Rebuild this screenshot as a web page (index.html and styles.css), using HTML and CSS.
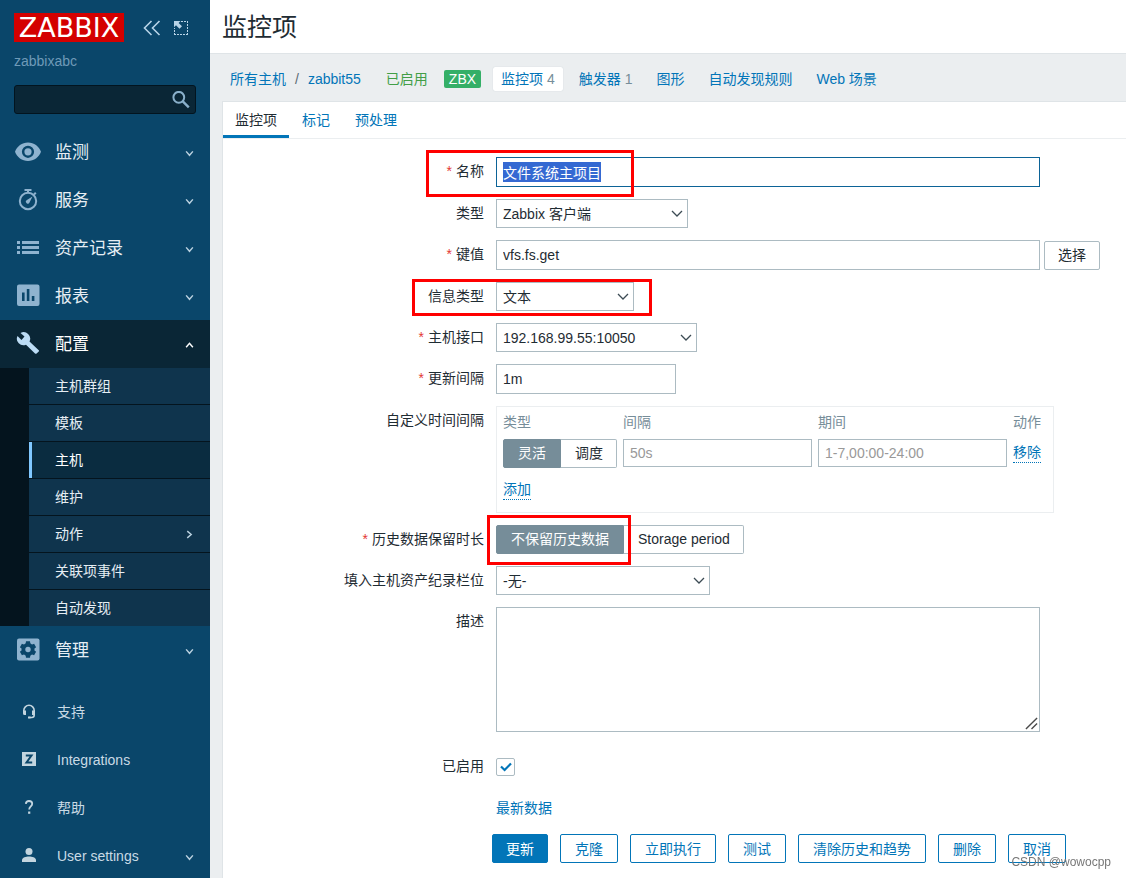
FILE: index.html
```html
<!DOCTYPE html>
<html lang="zh-CN">
<head>
<meta charset="utf-8">
<meta name="viewport" content="width=device-width, initial-scale=1">
<title>监控项</title>
<link rel="stylesheet" href="styles.css">
<script src="script.js" defer></script>
</head>
<body>
<div class="layout">
  <aside class="sidebar">
    <div class="sidebar-header">
      <a class="logo" href="#">ZABBIX</a>
      <button class="icon-button" type="button" aria-label="收起侧栏">
        <svg width="18" height="16" viewBox="0 0 18 16" fill="none" stroke="currentColor" stroke-width="1.6"><path d="M8.500 1 1.500 8l7 7M16.500 1l-7 7 7 7"/></svg>
      </button>
      <button class="icon-button" type="button" aria-label="隐藏侧栏">
        <svg width="16" height="16" viewBox="0 0 16 16" fill="none" stroke="currentColor"><path d="M8 1.500h7M14.500 1v14M15 14.500H1M1.500 15V8" stroke-dasharray="2 1"/><path d="M1 1h6.500L5.600 2.900 9 6.300 6.500 8.800 3 5.300 1 7.300z" fill="currentColor" stroke="none"/></svg>
      </button>
    </div>
    <div class="server-name">zabbixabc</div>
    <form class="search">
      <input class="search-input" type="text" aria-label="搜索">
      <button class="search-button" type="button" aria-label="搜索">
        <svg width="18" height="18" viewBox="0 0 18 18" fill="none" stroke="currentColor"><circle cx="6.800" cy="6.300" r="5.400" stroke-width="2"/><path d="m10.800 10.300 6 6" stroke-width="2.400"/></svg>
      </button>
    </form>
    <nav class="menu">
      <a class="menu-item" href="#">
        <svg class="menu-icon" viewBox="0 0 28 24"><path fill="currentColor" fill-rule="evenodd" d="M14 2.500C8 2.500 3 6.300 1 11.800 3 17.300 8 21 14 21s11-3.700 13-9.200C25 6.300 20 2.500 14 2.500zm0 15.400a6.100 6.100 0 1 1 0-12.200 6.100 6.100 0 0 1 0 12.200zm0-2.500a3.600 3.600 0 1 0 0-7.200 3.600 3.600 0 0 0 0 7.200z"/></svg>
        <span>监测</span><svg class="chevron" viewBox="0 0 8 8"><path d="m1 3 3 3.500L7 3"/></svg>
      </a>
      <a class="menu-item" href="#">
        <svg class="menu-icon" viewBox="0 0 28 24" fill="none" stroke="currentColor"><circle cx="14" cy="13" r="8.200" stroke-width="2"/><path d="M10.500 2h7" stroke-width="2"/><path d="M14 2v3m6 1.500 1.800-1.800" stroke-width="2"/><path d="m18.500 8.500-3 6a1.900 1.900 0 1 1-3-2.200z" fill="currentColor" stroke="none"/></svg>
        <span>服务</span><svg class="chevron" viewBox="0 0 8 8"><path d="m1 3 3 3.500L7 3"/></svg>
      </a>
      <a class="menu-item" href="#">
        <svg class="menu-icon" viewBox="0 0 28 24" fill="currentColor"><path d="M3 5h3v3H3zm5 0h17v3H8zM3 10h3v3H3zm5 0h17v3H8zM3 15h3v3H3zm5 0h17v3H8z"/></svg>
        <span>资产记录</span><svg class="chevron" viewBox="0 0 8 8"><path d="m1 3 3 3.500L7 3"/></svg>
      </a>
      <a class="menu-item" href="#">
        <svg class="menu-icon" viewBox="0 0 28 24" fill="currentColor" fill-rule="evenodd"><path d="M5 .5h18.500a2 2 0 0 1 2 2V20a2 2 0 0 1-2 2H5a2 2 0 0 1-2-2V2.500a2 2 0 0 1 2-2zm3 8V17h2.600V8.500zM12.800 5v12h2.600V5zm5 7v5h2.600v-5z"/></svg>
        <span>报表</span><svg class="chevron" viewBox="0 0 8 8"><path d="m1 3 3 3.500L7 3"/></svg>
      </a>
      <a class="menu-item menu-item-open" href="#" aria-expanded="true">
        <svg class="menu-icon" viewBox="0 0 28 24" fill="currentColor"><path d="M25 18.500 15.500 9.500A6.500 6.500 0 0 0 6.500 1L10.500 4.600 7.500 8 3.500 4A6.500 6.500 0 0 0 12 12.700l9 8.800a1.200 1.200 0 0 0 1.600 0l2.400-2.200z"/></svg>
        <span>配置</span><svg class="chevron" viewBox="0 0 8 8"><path d="m1 6.500 3-3.500 3 3.500"/></svg>
      </a>
      <div class="submenu">
        <a class="submenu-item" href="#">主机群组</a>
        <a class="submenu-item" href="#">模板</a>
        <a class="submenu-item submenu-item-active" href="#">主机</a>
        <a class="submenu-item" href="#">维护</a>
        <a class="submenu-item" href="#">动作<svg class="chevron" viewBox="0 0 8 8"><path d="m2 1 3.500 3L2 7"/></svg></a>
        <a class="submenu-item" href="#">关联项事件</a>
        <a class="submenu-item" href="#">自动发现</a>
      </div>
      <a class="menu-item" href="#">
        <svg class="menu-icon" viewBox="0 0 28 24"><rect x="3" y=".5" width="22.500" height="22" rx="2" fill="currentColor"/><g fill="#0a466a"><circle cx="14" cy="11.500" r="6.500"/><path id="teeth" d="M12 3.300h4l.6 4h-5.200zM12 19.700h4l.6-4h-5.200z"/><use href="#teeth" transform="rotate(60 14 11.500)"/><use href="#teeth" transform="rotate(120 14 11.500)"/></g><circle cx="14" cy="11.500" r="2.700" fill="currentColor"/></svg>
        <span>管理</span><svg class="chevron" viewBox="0 0 8 8"><path d="m1 3 3 3.500L7 3"/></svg>
      </a>
    </nav>
    <nav class="user-menu">
      <a class="user-item" href="#">
        <svg class="user-icon" viewBox="0 0 16 16" fill="none" stroke="currentColor"><path d="M2.800 8V6.500a5.200 5.200 0 0 1 10.400 0V11c0 1.800-1 2.500-2.500 2.500H8.500" stroke-width="1.600"/><path d="M2 6.500h3V11H3.500A1.500 1.500 0 0 1 2 9.500zm9 0h3v3a1.500 1.500 0 0 1-1.500 1.500H11zM7 12.500h2.500v2H7z" fill="currentColor" stroke="none"/></svg>
        <span>支持</span>
      </a>
      <a class="user-item" href="#">
        <svg class="user-icon" viewBox="0 0 16 16"><path fill="currentColor" d="M1 0h14v14H1z"/><path d="M4.800 3.500h5.700l-5 7h5.700" fill="none" stroke="#0a466a" stroke-width="2"/></svg>
        <span>Integrations</span>
      </a>
      <a class="user-item" href="#">
        <svg class="user-icon" viewBox="0 0 16 16"><path d="M4.800 3.800C5 2 6.200 1 8 1s3.200 1 3.200 2.700c0 2.600-3 2.800-3 5.800" fill="none" stroke="currentColor" stroke-width="1.800"/><path fill="currentColor" d="M7.100 11.500h2.200v2.300H7.100z"/></svg>
        <span>帮助</span>
      </a>
      <a class="user-item" href="#">
        <svg class="user-icon" viewBox="0 0 16 16" fill="currentColor"><circle cx="8" cy="3.500" r="3.500"/><path d="M1 14v-2c0-2.500 4-3.500 7-3.500s7 1 7 3.500v2z"/></svg>
        <span>User settings</span><svg class="chevron" viewBox="0 0 8 8"><path d="m1 3 3 3.500L7 3"/></svg>
      </a>
    </nav>
  </aside>

  <main class="main">
    <header class="page-header"><h1 class="page-title">监控项</h1></header>
    <nav class="host-nav">
      <a href="#">所有主机</a><span class="slash">/</span><a href="#">zabbit55</a>
      <span class="status">已启用</span>
      <span class="badge">ZBX</span>
      <div class="host-links">
        <a class="host-link host-link-active" href="#">监控项 <span class="count">4</span></a>
        <a class="host-link" href="#">触发器 <span class="count">1</span></a>
        <a class="host-link" href="#">图形</a>
        <a class="host-link" href="#">自动发现规则</a>
        <a class="host-link" href="#">Web 场景</a>
      </div>
    </nav>

    <section class="card">
      <nav class="tabs">
        <a class="tab tab-active" href="#">监控项</a>
        <a class="tab" href="#">标记</a>
        <a class="tab" href="#">预处理</a>
      </nav>
      <form class="form">
        <div class="row">
          <label class="label required" for="name">名称</label>
          <div class="field"><input class="text wide" id="name" type="text" value="文件系统主项目"><span class="mark mark-name"></span></div>
        </div>
        <div class="row">
          <label class="label" for="type">类型</label>
          <div class="field"><div class="select-box size-type"><select class="select" id="type"><option>Zabbix 客户端</option></select><svg class="arrow" viewBox="0 0 12 8"><path d="m1 1 5 5 5-5"/></svg></div></div>
        </div>
        <div class="row">
          <label class="label required" for="key">键值</label>
          <div class="field"><input class="text wide" id="key" type="text" value="vfs.fs.get"><button class="plain-button" type="button">选择</button></div>
        </div>
        <div class="row">
          <label class="label" for="info">信息类型</label>
          <div class="field"><div class="select-box size-info"><select class="select" id="info"><option>文本</option></select><svg class="arrow" viewBox="0 0 12 8"><path d="m1 1 5 5 5-5"/></svg></div><span class="mark mark-info"></span></div>
        </div>
        <div class="row">
          <label class="label required" for="interface">主机接口</label>
          <div class="field"><div class="select-box size-interface"><select class="select" id="interface"><option>192.168.99.55:10050</option></select><svg class="arrow" viewBox="0 0 12 8"><path d="m1 1 5 5 5-5"/></svg></div></div>
        </div>
        <div class="row">
          <label class="label required" for="update">更新间隔</label>
          <div class="field"><input class="text short" id="update" type="text" value="1m"></div>
        </div>
        <div class="row">
          <span class="label">自定义时间间隔</span>
          <div class="field">
            <div class="intervals">
              <table class="interval-table">
                <thead><tr><th class="col-type">类型</th><th>间隔</th><th>期间</th><th>动作</th></tr></thead>
                <tbody>
                  <tr>
                    <td><div class="segments">
                      <label class="segment"><input type="radio" name="mode" checked><span>灵活</span></label>
                      <label class="segment"><input type="radio" name="mode"><span>调度</span></label>
                    </div></td>
                    <td><input class="text cell" type="text" placeholder="50s" aria-label="间隔"></td>
                    <td><input class="text cell" type="text" placeholder="1-7,00:00-24:00" aria-label="期间"></td>
                    <td><button class="link-button" type="button">移除</button></td>
                  </tr>
                </tbody>
              </table>
              <button class="link-button" type="button">添加</button>
            </div>
          </div>
        </div>
        <div class="row">
          <span class="label required">历史数据保留时长</span>
          <div class="field">
            <div class="segments">
              <label class="segment"><input type="radio" name="history" checked><span>不保留历史数据</span></label>
              <label class="segment"><input type="radio" name="history"><span>Storage period</span></label>
            </div>
            <span class="mark mark-history"></span>
          </div>
        </div>
        <div class="row">
          <label class="label" for="inventory">填入主机资产纪录栏位</label>
          <div class="field"><div class="select-box size-inventory"><select class="select" id="inventory"><option>-无-</option></select><svg class="arrow" viewBox="0 0 12 8"><path d="m1 1 5 5 5-5"/></svg></div></div>
        </div>
        <div class="row row-description">
          <label class="label" for="description">描述</label>
          <div class="field"><div class="area-box"><textarea class="area" id="description"></textarea><svg class="grip" viewBox="0 0 14 14"><path d="M1 13 13 1M7 13l6-6"/></svg></div></div>
        </div>
        <div class="row">
          <label class="label" for="enabled">已启用</label>
          <div class="field"><div class="check-box"><input class="check" id="enabled" type="checkbox" checked><svg class="tick" viewBox="0 0 12 10"><path d="m1 4.500 3.600 3.500L11 1.500"/></svg></div></div>
        </div>
        <div class="row">
          <span class="label"></span>
          <div class="field"><a href="#">最新数据</a></div>
        </div>
        <div class="actions">
          <button class="action action-primary" type="submit">更新</button>
          <button class="action" type="button">克隆</button>
          <button class="action" type="button">立即执行</button>
          <button class="action" type="button">测试</button>
          <button class="action" type="button">清除历史和趋势</button>
          <button class="action" type="button">删除</button>
          <button class="action" type="button">取消</button>
        </div>
      </form>
    </section>
  </main>
</div>
<div class="watermark">CSDN @wowocpp</div>
</body>
</html>
```

FILE: styles.css
```css
* { box-sizing: border-box; }

body {
  margin: 0;
  font: 14px/20px "Liberation Sans", "Noto Sans CJK SC", sans-serif;
  color: #1f2c33;
  background: #ebeef0;
}

input, select, textarea, button { font: inherit; color: inherit; margin: 0; }
button { cursor: pointer; white-space: nowrap; }
a { color: #0275b8; text-decoration: none; }
svg { display: block; flex: none; }

.layout { display: flex; min-height: 100vh; }

/* Sidebar */
.sidebar { flex: none; width: 210px; background: #0a466a; }
.sidebar-header { display: flex; align-items: center; padding: 13px 14px 0; }
.logo {
  width: 110px;
  margin-right: 19px;
  background: #d40000;
  color: #fff;
  font: 27px/29px "DejaVu Sans", sans-serif;
  text-align: center;
}
.icon-button { padding: 0; border: 0; background: none; color: #b8d4e8; }
.icon-button + .icon-button { margin-left: 12px; }
.server-name { padding: 9px 14px 14px; color: #6f9ab8; }
.search {
  display: flex;
  align-items: center;
  height: 29px;
  margin: 0 14px 14px;
  border: 1px solid #02141f;
  border-radius: 3px;
  background: #0a2636;
}
.search-input { flex: 1; min-width: 0; border: 0; outline: 0; background: none; color: #fff; }
.search-button { padding: 0 5px; border: 0; background: none; color: #8ab0cb; }

.menu-item, .user-item { display: flex; align-items: center; height: 48px; padding: 0 16px 0 14px; }
.menu-item { color: #e6eef4; font-size: 17px; line-height: 24px; }
.menu-item span { padding-top: 1px; }
.menu-icon { width: 28px; height: 24px; margin-right: 13px; color: #8fb3cf; }
.menu-item-open { background: #0a2636; color: #fff; }
.menu-item-open .menu-icon { color: #bcdcf5; }
.chevron { width: 9px; height: 9px; margin-left: auto; fill: none; stroke: #b9d0df; stroke-width: 1.3; }
.menu-item-open .chevron { stroke: #fff; }

.submenu { border-left: 29px solid #04141e; background: #0f344d; }
.submenu-item {
  display: flex;
  align-items: center;
  height: 37px;
  padding: 0 16px 0 26px;
  border-bottom: 1px solid #04141e;
  color: #e6eef4;
}
.submenu-item:last-child { height: 36px; border-bottom: 0; }
.submenu-item-active { padding-left: 23px; box-shadow: inset 3px 0 #80c8ff; background: #0a2c40; color: #fff; padding-left: 26px; }

.user-menu { padding-top: 14px; }
.user-item { color: #c9dae5; }
.user-icon { width: 16px; height: 16px; margin: 0 20px 0 7px; color: #c3d5df; }

/* Page header */
.main { display: flex; flex: 1; flex-direction: column; min-width: 0; }
.page-header { padding: 9px 12px 8px; border-bottom: 1px solid #dfe4e7; background: #fff; }
.page-title { margin: 0; font-size: 25px; line-height: 36px; font-weight: normal; }
.host-nav { display: flex; align-items: center; height: 47px; padding: 3px 20px 0; white-space: nowrap; }
.slash { margin: 0 9px; color: #5c6a73; }
.status { margin: 0 16px 0 25px; color: #429e47; }
.badge { padding: 0 5px; border-radius: 2px; background: #34af67; color: #fff; line-height: 18px; }
.host-links { display: flex; gap: 8px; margin-left: 12px; }
.host-link { padding: 2px 8px; border-radius: 2px; }
.host-link-active { background: #fff; box-shadow: 0 0 1px #b9c4cc; }
.count { color: #768d99; }

.card { flex: 1; margin-left: 12px; border: solid #dfe4e7; border-width: 1px 0 0 1px; background: #fff; }
.tabs { display: flex; gap: 1px; border-bottom: 1px solid #ebeef0; }
.tab { padding: 8px 12px 5px; border-bottom: 3px solid transparent; }
.tab-active { border-color: #0275b8; color: #1f2c33; }

/* Form */
.form { display: flex; flex-direction: column; gap: 12px; padding: 18px 0 13px; }
.row { display: grid; grid-template-columns: 261px 1fr; gap: 12px; }
.label { padding-top: 4px; text-align: right; white-space: nowrap; }
.required::before { content: "*"; margin-right: 4px; color: #e33734; }
.field { position: relative; display: flex; align-items: center; gap: 4px; min-width: 0; min-height: 29px; }

.text, .select, .area { border: 1px solid #acbbc2; border-radius: 0; outline: 0; background: #fff; }
.text { height: 30px; padding: 0 6px; }
.text:focus { border-color: #0c6397; }
.text::selection { background: rgba(51, 103, 209, 0.99); color: #fff; }
.text::placeholder { color: #999; opacity: 1; }
.wide { width: 544px; min-width: 0; }
.short { width: 180px; }
.cell { display: block; width: 189px; height: 28px; }

.select-box { position: relative; }
.select { width: 100%; height: 29px; padding: 0 6px; appearance: none; display: block; }
.arrow {
  position: absolute;
  top: 11px;
  right: 5px;
  width: 12px;
  height: 8px;
  fill: none;
  stroke: #3c4b54;
  stroke-width: 1.3;
  pointer-events: none;
}
.size-type { width: 192px; }
.size-info { width: 138px; }
.size-interface { width: 201px; }
.size-inventory { width: 214px; }

.plain-button { height: 29px; padding: 0 13px; border: 1px solid #acbbc2; border-radius: 2px; background: #fff; }

.intervals { padding: 0 12px 12px 6px; border: 1px solid #ebeef0; }
.interval-table { border-collapse: collapse; margin-bottom: 12px; }
.interval-table th { height: 32px; padding: 0 0 2px; color: #768d99; font-weight: normal; text-align: left; }
.interval-table td { height: 29px; padding: 0 6px 0 0; vertical-align: top; }
.interval-table td:last-child { padding: 4px 0 0; }
.col-type { width: 118px; }
.link-button { display: block; padding: 0; border: 0; border-bottom: 1px dotted #0275b8; background: none; color: #0275b8; line-height: 19px; }

.segments { display: flex; }
.segment { position: relative; display: block; white-space: nowrap; }
.segment input { position: absolute; inset: 0; opacity: 0; }
.segment span {
  display: block;
  height: 29px;
  padding: 0 14px;
  border: 1px solid #acbbc2;
  border-left: 0;
  border-radius: 0 2px 2px 0;
  line-height: 27px;
}
.segment:first-child span { border-left: 1px solid #acbbc2; border-radius: 2px 0 0 2px; }
.segment:last-child span { padding: 0 13px 0 14px; }
.segment input:checked + span { border-color: #768d99; background: #768d99; color: #fff; }

.row-description { padding-bottom: 8px; }
.area-box { position: relative; width: 544px; }
.area { display: block; width: 100%; height: 125px; padding: 6px; resize: none; }
.grip { position: absolute; right: 2px; bottom: 2px; width: 13px; height: 13px; stroke: #4a4a4a; stroke-width: 1.5; }

.check-box { position: relative; }
.check { display: block; width: 19px; height: 18px; border: 1px solid #acbbc2; border-radius: 2px; background: #fff; appearance: none; }
.tick { position: absolute; top: 4px; left: 4px; width: 12px; height: 10px; fill: none; stroke: #0275b8; stroke-width: 2.2; pointer-events: none; }
.check:not(:checked) + .tick { display: none; }

.actions { display: flex; gap: 12px; padding-left: 269px; }
.action { height: 29px; padding: 0 14px; border: 1px solid #0275b8; border-radius: 2px; background: #fff; color: #0275b8; }
.action-primary { padding: 0 13px; background: #0275b8; color: #fff; }

/* Annotations over the form */
.mark { position: absolute; border: 3px solid #f00; pointer-events: none; }
.mark-name { top: -7px; left: -70px; width: 208px; height: 47px; }
.mark-info { top: -3px; left: -84px; width: 240px; height: 37px; }
.mark-history { top: -10px; left: -9px; width: 144px; height: 50px; }
.watermark { position: fixed; right: 15px; bottom: 6px; color: #777; font-size: 12px; pointer-events: none; }
```

FILE: script.js
```js
const nameInput = document.getElementById("name");
nameInput.focus();
nameInput.select();
```
